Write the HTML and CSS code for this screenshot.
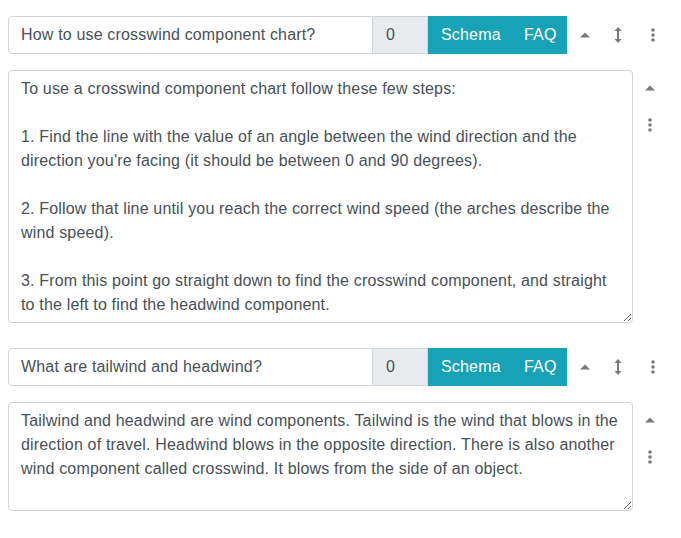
FILE: index.html
```html
<!DOCTYPE html>
<html lang="en">
<head>
<meta charset="utf-8">
<title>FAQ editor</title>
<link rel="stylesheet" href="styles.css">
</head>
<body>
<div class="faq-list">
  <div class="faq-item">
    <div class="question-row">
      <div class="input-group">
        <input class="question-input" type="text" value="How to use crosswind component chart?">
        <span class="count">0</span>
        <span class="btn btn-schema">Schema</span>
        <span class="btn btn-faq">FAQ</span>
      </div>
      <div class="row-actions">
        <button class="icon-btn caret-btn" aria-label="Collapse"><svg width="10" height="6" viewBox="0 0 10 6"><path d="M0 5.5 L5 0.5 L10 5.5 Z" fill="currentColor"/></svg></button>
        <button class="icon-btn move-btn" aria-label="Move"><svg width="8" height="16" viewBox="0 0 8 16"><path d="M4 0 L7.5 4 L5 4 L5 12 L7.5 12 L4 16 L0.5 12 L3 12 L3 4 L0.5 4 Z" fill="currentColor"/></svg></button>
        <button class="icon-btn menu-btn" aria-label="More"><svg width="4" height="14" viewBox="0 0 4 14"><circle cx="2" cy="2" r="1.8" fill="currentColor"/><circle cx="2" cy="7" r="1.8" fill="currentColor"/><circle cx="2" cy="12" r="1.8" fill="currentColor"/></svg></button>
      </div>
    </div>
    <div class="answer-row">
      <textarea class="answer answer-long">To use a crosswind component chart follow these few steps:

1. Find the line with the value of an angle between the wind direction and the direction you're facing (it should be between 0 and 90 degrees).

2. Follow that line until you reach the correct wind speed (the arches describe the wind speed).

3. From this point go straight down to find the crosswind component, and straight to the left to find the headwind component.</textarea>
      <div class="side-actions">
        <button class="icon-btn caret-btn" aria-label="Collapse"><svg width="10" height="6" viewBox="0 0 10 6"><path d="M0 5.5 L5 0.5 L10 5.5 Z" fill="currentColor"/></svg></button>
        <button class="icon-btn menu-btn" aria-label="More"><svg width="4" height="14" viewBox="0 0 4 14"><circle cx="2" cy="2" r="1.8" fill="currentColor"/><circle cx="2" cy="7" r="1.8" fill="currentColor"/><circle cx="2" cy="12" r="1.8" fill="currentColor"/></svg></button>
      </div>
    </div>
  </div>

  <div class="faq-item">
    <div class="question-row">
      <div class="input-group">
        <input class="question-input" type="text" value="What are tailwind and headwind?">
        <span class="count">0</span>
        <span class="btn btn-schema">Schema</span>
        <span class="btn btn-faq">FAQ</span>
      </div>
      <div class="row-actions">
        <button class="icon-btn caret-btn" aria-label="Collapse"><svg width="10" height="6" viewBox="0 0 10 6"><path d="M0 5.5 L5 0.5 L10 5.5 Z" fill="currentColor"/></svg></button>
        <button class="icon-btn move-btn" aria-label="Move"><svg width="8" height="16" viewBox="0 0 8 16"><path d="M4 0 L7.5 4 L5 4 L5 12 L7.5 12 L4 16 L0.5 12 L3 12 L3 4 L0.5 4 Z" fill="currentColor"/></svg></button>
        <button class="icon-btn menu-btn" aria-label="More"><svg width="4" height="14" viewBox="0 0 4 14"><circle cx="2" cy="2" r="1.8" fill="currentColor"/><circle cx="2" cy="7" r="1.8" fill="currentColor"/><circle cx="2" cy="12" r="1.8" fill="currentColor"/></svg></button>
      </div>
    </div>
    <div class="answer-row">
      <textarea class="answer answer-short">Tailwind and headwind are wind components. Tailwind is the wind that blows in the direction of travel. Headwind blows in the opposite direction. There is also another wind component called crosswind. It blows from the side of an object.</textarea>
      <div class="side-actions">
        <button class="icon-btn caret-btn" aria-label="Collapse"><svg width="10" height="6" viewBox="0 0 10 6"><path d="M0 5.5 L5 0.5 L10 5.5 Z" fill="currentColor"/></svg></button>
        <button class="icon-btn menu-btn" aria-label="More"><svg width="4" height="14" viewBox="0 0 4 14"><circle cx="2" cy="2" r="1.8" fill="currentColor"/><circle cx="2" cy="7" r="1.8" fill="currentColor"/><circle cx="2" cy="12" r="1.8" fill="currentColor"/></svg></button>
      </div>
    </div>
  </div>
</div>
</body>
</html>
```

FILE: styles.css
```css
* { box-sizing: border-box; }

body {
  margin: 8px;
  padding-top: 8px;
  background: #fff;
  font-family: "Liberation Sans", Arial, sans-serif;
  font-size: 16px;
  letter-spacing: 0.17px;
  color: #495057;
}

.faq-list {
  display: flex;
  flex-direction: column;
  gap: 25px;
}

.question-row {
  display: flex;
  align-items: center;
}

.input-group {
  display: flex;
  width: 559px;
  height: 38px;
}

.question-input {
  flex: 1;
  min-width: 0;
  height: 38px;
  margin: 0;
  padding: 6px 12px;
  border: 1px solid #ced4da;
  border-radius: 4px 0 0 4px;
  font: inherit;
  letter-spacing: inherit;
  color: #495057;
  background: #fff;
  outline: none;
}

.count {
  flex: none;
  width: 55px;
  display: flex;
  align-items: center;
  padding-left: 13px;
  background: #e9ecef;
  border: 1px solid #ced4da;
  border-left: none;
  color: #495057;
}

.btn {
  flex: none;
  display: flex;
  align-items: center;
  padding-left: 13px;
  background: #17a2b8;
  color: #fff;
  line-height: 24px;
}

.btn-schema { width: 83px; }
.btn-faq { width: 56px; }

.row-actions {
  display: flex;
  align-items: center;
  margin-left: 12px;
}

.icon-btn {
  display: flex;
  align-items: center;
  justify-content: center;
  padding: 0;
  margin: 0;
  border: none;
  background: none;
  color: #757b80;
  cursor: pointer;
}

.row-actions .caret-btn { width: 12px; height: 38px; }
.row-actions .move-btn { width: 8px; height: 38px; margin-left: 23px; }
.row-actions .menu-btn { width: 4px; height: 38px; margin-left: 29px; }

.answer-row {
  display: flex;
  margin-top: 16px;
}

.answer {
  display: block;
  width: 625px;
  margin: 0;
  padding: 6px 12px;
  border: 1px solid #ced4da;
  border-radius: 4px;
  font: inherit;
  letter-spacing: inherit;
  line-height: 24px;
  color: #495057;
  background: #fff;
  resize: vertical;
  overflow: hidden;
  outline: none;
}

.answer-long { height: 253px; }
.answer-short { height: 109px; }

.side-actions {
  display: flex;
  flex-direction: column;
  align-items: center;
  width: 34px;
  padding-top: 15px;
  gap: 27px;
}

.side-actions .caret-btn { width: 12px; height: 6px; }
.side-actions .menu-btn { width: 4px; height: 14px; }
```
